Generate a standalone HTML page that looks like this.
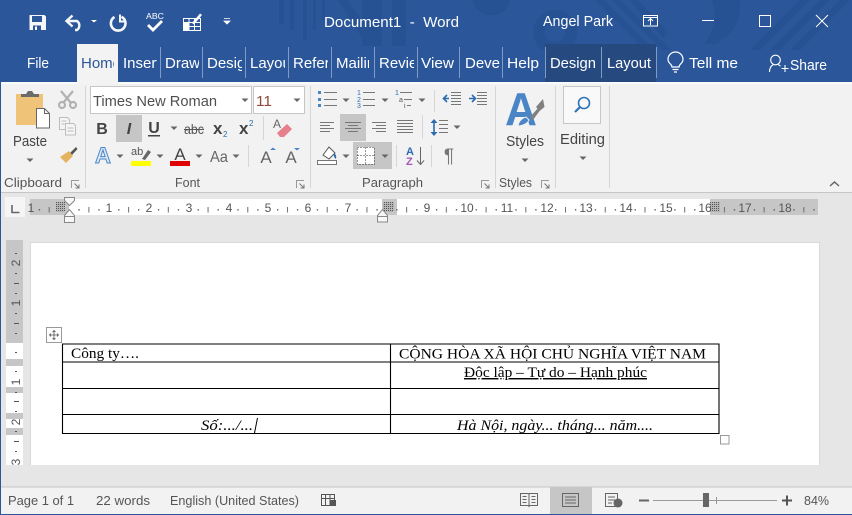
<!DOCTYPE html>
<html><head><meta charset="utf-8"><title>Document1 - Word</title>
<style>
html,body{margin:0;padding:0;background:#e6e6e6;width:852px;height:515px;overflow:hidden}
svg{display:block}
text{font-family:"Liberation Sans",sans-serif;white-space:pre}
.t{fill:#fff;font-size:15px}
.r{fill:#444;font-size:15px}
.s{fill:#555;font-size:13px}
.d{font-family:"Liberation Serif","Noto Serif CJK SC",serif;font-size:14.500px;fill:#000}
.n{fill:#555;font-size:12px;text-anchor:middle}
.w{fill:none;stroke:#fff}
</style></head><body>
<svg width="852" height="515" viewBox="0 0 852 515" xmlns="http://www.w3.org/2000/svg">
<defs>
<symbol id="ar" overflow="visible"><path d="M-3.5-1.5h7L0 2z" fill="#666"/></symbol>
<symbol id="la" overflow="visible"><path d="M.5 8V.5H8" fill="none" stroke="#999"/><path d="M3.5 3.5L8 8M8 4.5V8H4.5" fill="none" stroke="#777"/></symbol>
<pattern id="tk" x="69" y="0" width="39.72" height="20" patternUnits="userSpaceOnUse">
<rect x="9.5" y="7" width="1.2" height="1.6" fill="#555"/><rect x="19.4" y="5" width="1" height="5.5" fill="#666"/><rect x="29.4" y="7" width="1.2" height="1.6" fill="#555"/>
</pattern>
<pattern id="hat" width="2" height="2" patternUnits="userSpaceOnUse"><rect width="2" height="2" fill="#b5b5b5"/><rect width="1" height="1" fill="#555"/></pattern>
<clipPath id="c1"><rect x="77" y="44" width="37" height="38"/></clipPath>
<clipPath id="c2"><rect x="119" y="44" width="38" height="38"/></clipPath>
<clipPath id="c3"><rect x="162" y="44" width="37" height="38"/></clipPath>
<clipPath id="c4"><rect x="204" y="44" width="38" height="38"/></clipPath>
<clipPath id="c5"><rect x="247" y="44" width="38" height="38"/></clipPath>
<clipPath id="c6"><rect x="290" y="44" width="38" height="38"/></clipPath>
<clipPath id="c7"><rect x="333" y="44" width="36" height="38"/></clipPath>
<clipPath id="c8"><rect x="376" y="44" width="38" height="38"/></clipPath>
<clipPath id="c9"><rect x="462" y="44" width="38" height="38"/></clipPath>
</defs>

<!-- window base -->
<rect width="852" height="515" fill="#e6e6e6"/>
<rect width="852" height="82" fill="#2b579a"/>

<!-- title watermark -->
<g fill="#1f4a8a" opacity=".38">
<rect x="279" y="0" width="5" height="24"/><rect x="290" y="0" width="4" height="30"/><rect x="303" y="0" width="4" height="40"/><rect x="313" y="0" width="3" height="30"/><rect x="322" y="0" width="3" height="20"/>
<path d="M338 0h10l30 44h-12zM362 0h20v46h-20zM392 0h14v46h-14z"/>
<path d="M473 0h37a18 15 0 0 1-37 0z"/>
<path d="M555 10a22 22 0 1 0 .1 0zm0 12a10 10 0 1 1-.1 0z" fill-rule="evenodd"/>
<path d="M595 0h9l50 50h-9zM612 0h9l50 50h-9zM629 0h9l30 32-5 6z"/>
<path d="M712 0h28q2 30-24 44h-12q16-20 8-44z"/>
<path d="M800 0h10l-50 50h-10zM820 0h10l-50 50h-10zM840 0h10l-50 50h-10z"/>
</g>

<!-- QAT -->
<path d="M29.5 15h15l1.5 1.5V30H29.5z" fill="#f4f6fa"/>
<rect x="32" y="16" width="10" height="6" fill="#2b579a"/>
<rect x="33" y="25.5" width="8" height="4.500" fill="#2b579a"/><rect x="35" y="26.500" width="2" height="3.500" fill="#fff"/>
<path d="M67 21h10a5.500 5.500 0 0 1 0 9h-2" fill="none" stroke="#f4f6fa" stroke-width="2.400"/>
<path d="M72.500 15.500L66.500 21l6 5.500" fill="none" stroke="#f4f6fa" stroke-width="2.400"/>
<path d="M91 20h6l-3 2.500z" fill="#fff"/>
<path d="M114.500 17a7.300 7.300 0 1 0 7-.2" fill="none" stroke="#f4f6fa" stroke-width="2.600"/>
<path d="M120 14.500v7h6" fill="none" stroke="#f4f6fa" stroke-width="2"/>
<text x="146" y="19" fill="#fff" font-size="8.500" textLength="18" lengthAdjust="spacingAndGlyphs">ABC</text>
<path d="M148 25l5 5 9-9" fill="none" stroke="#fff" stroke-width="2.800"/>
<path d="M183.500 18.500h17v12h-17zM183.500 22.500h17M183.500 26.500h17M189 18.500v12M194.500 18.500v12" fill="none" stroke="#fff"/>
<rect x="184" y="23" width="5" height="7" fill="#fff"/>
<path d="M192 23l8-9.500 2 1.500-8 9.500z" fill="#fff"/>
<path d="M224 18.500h6M224 21h6l-3 3z" stroke="#fff" fill="#fff" stroke-width=".8"/>

<!-- title text -->
<text class="t" x="324" y="27" textLength="135" lengthAdjust="spacingAndGlyphs" xml:space="preserve">Document1  -  Word</text>
<text class="t" x="543" y="26" textLength="70" lengthAdjust="spacingAndGlyphs">Angel Park</text>
<g stroke="#fff" fill="none">
<path d="M643.500 15.500h14v10.500h-14zM643.500 17.500h14M650.500 25v-6M648 21l2.500-2.500 2.500 2.500"/>
<path d="M702 20.500h12"/>
<rect x="759.500" y="15.500" width="11" height="11"/>
<path d="M816 15l12 12M828 15l-12 12"/>
</g>

<!-- tabs -->
<rect x="545" y="44" width="111" height="38" fill="#26497f"/>
<rect x="77" y="44" width="41" height="39" fill="#f3f3f3"/>
<g stroke="#7f9cc6" stroke-width="1">
<path d="M160.500 47v31M202.500 47v31M245.500 47v31M288.500 47v31M331.500 47v31M374.500 47v31M417.500 47v31M459.500 47v31M502.500 47v31M545.500 47v31M601.500 47v31M656.500 47v31"/>
</g>
<text class="t" x="27" y="68" textLength="22" lengthAdjust="spacingAndGlyphs">File</text>
<g clip-path="url(#c1)"><text x="81" y="68" font-size="15" fill="#2b579a">Home</text></g>
<g clip-path="url(#c2)"><text class="t" x="123" y="68">Insert</text></g>
<g clip-path="url(#c3)"><text class="t" x="165" y="68">Draw</text></g>
<g clip-path="url(#c4)"><text class="t" x="207" y="68">Design</text></g>
<g clip-path="url(#c5)"><text class="t" x="250" y="68">Layout</text></g>
<g clip-path="url(#c6)"><text class="t" x="293" y="68">References</text></g>
<g clip-path="url(#c7)"><text class="t" x="336" y="68">Mailings</text></g>
<g clip-path="url(#c8)"><text class="t" x="379" y="68">Review</text></g>
<text class="t" x="421" y="68" textLength="33" lengthAdjust="spacingAndGlyphs">View</text>
<g clip-path="url(#c9)"><text class="t" x="465" y="68">Developer</text></g>
<text class="t" x="507" y="68" textLength="32" lengthAdjust="spacingAndGlyphs">Help</text>
<text class="t" x="550" y="68" textLength="46" lengthAdjust="spacingAndGlyphs">Design</text>
<text class="t" x="607" y="68" textLength="44" lengthAdjust="spacingAndGlyphs">Layout</text>
<path d="M672 67c0-3-4-3.500-4-7.500a7.500 7.500 0 0 1 15 0c0 4-4 4.500-4 7.500zM672.500 69.500h6M674 72h3" fill="none" stroke="#fff" stroke-width="1.200"/>
<text class="t" x="689" y="68" textLength="49" lengthAdjust="spacingAndGlyphs">Tell me</text>
<circle cx="775.500" cy="60" r="4.800" fill="none" stroke="#fff" stroke-width="1.100"/>
<path d="M769.500 72c0-4 2-6.500 4-7.500M778 64.500c1 .4 1.800 1 2.500 1.800M785 65v7M781.500 68.500h7" fill="none" stroke="#fff" stroke-width="1.100"/>
<text class="t" x="790" y="70" textLength="37" lengthAdjust="spacingAndGlyphs">Share</text>

<!-- ribbon -->
<rect x="0" y="82" width="852" height="111" fill="#f2f2f2"/>
<rect x="0" y="82" width="852" height="2" fill="#f7fbf9"/>
<rect x="77" y="82" width="41" height="2" fill="#f3f3f3"/>
<rect x="0" y="192" width="852" height="1" fill="#c6c6c6"/>
<g stroke="#d6d6d6"><path d="M85.500 86v102M310.500 86v102M495.500 86v102M555.500 86v102M609.500 86v102"/></g>

<!-- clipboard -->
<rect x="16" y="94" width="27" height="31" fill="#f0c478"/>
<path d="M21 97v-3h5l2-3h4l2 3h5v3z" fill="#6b6b6b"/>
<path d="M36.500 108.500h8l5 5v14.500h-13z" fill="#fff" stroke="#666"/><path d="M44.500 108.500v5h5" fill="none" stroke="#666"/>
<text class="r" x="13" y="146" textLength="34" lengthAdjust="spacingAndGlyphs">Paste</text>
<use href="#ar" x="30" y="160"/>
<g fill="none" stroke="#b2b2b2" stroke-width="2.200"><path d="M61 91l10 12M73 91l-10 12"/><circle cx="62" cy="105" r="3"/><circle cx="73" cy="105" r="3"/></g>
<g fill="#f5f5f5" stroke="#bdbdbd"><path d="M59.500 117.500h8l2 2v10h-10z"/><path d="M65.500 123.500h8l2 2v9.500h-10z"/><path d="M61.500 121h5M61.500 124h3M67.500 128h6M67.500 131h6" fill="none"/></g>
<path d="M70 153l6-6 1.500 2-5.500 6z" fill="#555"/><path d="M60 157l9-6 4 5-7 7z" fill="#e3b35f"/>
<text class="s" x="4" y="187" textLength="58" lengthAdjust="spacingAndGlyphs">Clipboard</text>
<use href="#la" x="71" y="180"/>

<!-- font -->
<rect x="90.500" y="86.500" width="161" height="27" fill="#fff" stroke="#c6c6c6"/>
<rect x="253.500" y="86.500" width="51" height="27" fill="#fff" stroke="#c6c6c6"/>
<text x="93" y="106" font-size="14.500" fill="#505050" textLength="124" lengthAdjust="spacingAndGlyphs">Times New Roman</text>
<text x="256" y="106" font-size="14.500" fill="#8a4b3c" textLength="16" lengthAdjust="spacingAndGlyphs">11</text>
<use href="#ar" x="245" y="100"/><use href="#ar" x="297" y="100"/>
<rect x="116" y="115" width="26" height="27" fill="#c6c6c6"/>
<text x="102" y="134" font-size="16" font-weight="bold" fill="#444" text-anchor="middle">B</text>
<text x="129" y="134" font-size="16" font-style="italic" font-weight="bold" fill="#444" text-anchor="middle">I</text>
<text x="154" y="133" font-size="16" font-weight="bold" fill="#444" text-anchor="middle">U</text>
<rect x="148" y="135" width="12" height="1.500" fill="#444"/>
<use href="#ar" x="174" y="128"/>
<text x="184" y="134" font-size="14" fill="#555" textLength="20" lengthAdjust="spacingAndGlyphs">abc</text>
<rect x="184" y="129" width="20" height="1" fill="#555"/>
<text x="213" y="134" font-size="17" font-weight="bold" fill="#444">x</text><text x="223" y="137" font-size="8" fill="#2b6cb0">2</text>
<text x="239" y="134" font-size="17" font-weight="bold" fill="#444">x</text><text x="249" y="126" font-size="8" fill="#2b6cb0">2</text>
<rect x="263" y="116" width="1" height="24" fill="#d6d6d6"/>
<text x="273" y="128" font-size="12" fill="#666">A</text>
<path d="M277 133l10-9 5 5-8 8h-4z" fill="#e8808c"/>
<text x="103" y="163" font-size="22" font-weight="bold" fill="#dce9f7" stroke="#4a86c5" stroke-width="1" text-anchor="middle">A</text>
<use href="#ar" x="120" y="156"/>
<text x="131" y="155" font-size="11" fill="#555">ab</text>
<path d="M142 159l6-9 3 2-6 8z" fill="#666"/>
<rect x="131" y="161" width="20" height="5" fill="#ffff00"/>
<use href="#ar" x="160" y="156"/>
<text x="180" y="160" font-size="17" fill="#444" text-anchor="middle">A</text>
<rect x="170" y="161" width="20" height="5" fill="#e00000"/>
<use href="#ar" x="199" y="156"/>
<text x="210" y="162" font-size="16" fill="#666" textLength="18" lengthAdjust="spacingAndGlyphs">Aa</text>
<use href="#ar" x="236" y="156"/>
<rect x="248" y="145" width="1" height="22" fill="#d6d6d6"/>
<text x="266" y="163" font-size="17" fill="#666" text-anchor="middle">A</text><path d="M270 150h6l-3-2.500z" fill="#4a86c5"/>
<text x="291" y="163" font-size="17" fill="#666" text-anchor="middle">A</text><path d="M294 148h6l-3 2.500z" fill="#4a86c5"/>
<text class="s" x="175" y="187" textLength="25" lengthAdjust="spacingAndGlyphs">Font</text>
<use href="#la" x="296" y="180"/>

<!-- paragraph row 1 -->
<g fill="#4a86c5"><rect x="318" y="91" width="3" height="3"/><rect x="318" y="98" width="3" height="3"/><rect x="318" y="104" width="3" height="3"/></g>
<g stroke="#777"><path d="M324 92.500h13M324 99.500h13M324 105.500h13M363 92.500h12M363 99.500h12M363 105.500h12M400 92.500h12M404 99.500h8M407 105.500h4"/></g>
<g font-size="7" fill="#2b6cb0"><text x="357" y="95">1</text><text x="357" y="102">2</text><text x="357" y="108">3</text><text x="395" y="95">1</text><text x="399" y="102" fill="#555">a</text><text x="404" y="108" fill="#555">i</text></g>
<use href="#ar" x="346" y="100"/><use href="#ar" x="385" y="100"/><use href="#ar" x="422" y="100"/>
<rect x="434" y="90" width="1" height="22" fill="#d6d6d6"/>
<g stroke="#777"><path d="M451 92.500h10M451 95.500h10M451 98.500h10M451 101.500h10M451 104.500h10M477 92.500h10M477 95.500h10M477 98.500h10M477 101.500h10M477 104.500h10"/></g>
<path d="M449 98.500h-6M447 95l-3.500 3.500L447 102M469 98.500h6M472 95l3.500 3.500L472 102" fill="none" stroke="#2b6cb0" stroke-width="1.600"/>

<!-- paragraph row 2 -->
<rect x="340" y="114" width="26" height="27" fill="#c6c6c6"/>
<g stroke="#777"><path d="M320 122.500h14M320 125.500h10M320 128.500h14M320 131.500h10M345 122.500h16M348 125.500h10M345 128.500h16M348 131.500h10M372 122.500h14M376 125.500h10M372 128.500h14M376 131.500h10M397 120.500h16M397 123.500h16M397 126.500h16M397 129.500h16M397 132.500h16"/></g>
<rect x="422" y="115" width="1" height="24" fill="#d6d6d6"/>
<path d="M434 119l-3.500 4h7zM434 136l-3.500-4h7z" fill="#2b6cb0"/><rect x="433.200" y="122" width="1.600" height="11" fill="#2b6cb0"/>
<g stroke="#777"><path d="M439 120.500h9M439 124.500h9M439 128.500h9M439 132.500h9"/></g>
<use href="#ar" x="457" y="127"/>

<!-- paragraph row 3 -->
<rect x="353" y="142" width="39" height="27" fill="#c6c6c6"/>
<path d="M323 155l6-8 6 6-6 6z" fill="#fff" stroke="#555"/><path d="M334 153q3 2 2 6-3-2-2-6z" fill="#2b6cb0"/>
<rect x="317.500" y="160.500" width="19" height="4" fill="#fff" stroke="#777"/>
<use href="#ar" x="346" y="156"/>
<rect x="357" y="147" width="17" height="17" fill="#fff"/>
<path d="M357.500 147.500h17v17h-17zM357.500 155.500h17M365.500 147.500v17" fill="none" stroke="#333" stroke-dasharray="1 2"/>
<use href="#ar" x="385" y="156"/>
<rect x="396" y="145" width="1" height="22" fill="#d6d6d6"/>
<text x="406" y="155" font-size="11" font-weight="bold" fill="#2b6cb0">A</text>
<text x="406" y="165" font-size="11" font-weight="bold" fill="#a155b9">Z</text>
<path d="M420.500 147v17M417 160.500l3.500 4 3.500-4" fill="none" stroke="#666"/>
<rect x="431" y="145" width="1" height="22" fill="#d6d6d6"/>
<text x="449" y="162" font-size="19" fill="#777" text-anchor="middle">¶</text>
<text class="s" x="362" y="187" textLength="61" lengthAdjust="spacingAndGlyphs">Paragraph</text>
<use href="#la" x="481" y="180"/>

<!-- styles -->
<text x="505" y="125" font-size="46" font-weight="bold" fill="#4a86c5" textLength="32" lengthAdjust="spacingAndGlyphs">A</text>
<path d="M530 117l9-10 2 2-8 11z" fill="#808080"/>
<path d="M536 107l7-8 1.500 8-5 4z" fill="#808080"/>
<path d="M518 126q1-7 8-9l3 3q-2 5-11 6z" fill="#4a86c5" stroke="#f2f2f2"/>
<text class="r" x="506" y="146" textLength="38" lengthAdjust="spacingAndGlyphs">Styles</text>
<use href="#ar" x="525" y="160"/>
<text class="s" x="499" y="187" textLength="33" lengthAdjust="spacingAndGlyphs">Styles</text>
<use href="#la" x="541" y="180"/>

<!-- editing -->
<rect x="563.500" y="86.500" width="37" height="37" fill="#f9f9f9" stroke="#c6c6c6"/>
<circle cx="584" cy="103" r="5.500" fill="none" stroke="#2f75b5" stroke-width="1.600"/>
<path d="M580 107l-5 5" stroke="#2f75b5" stroke-width="2.200"/>
<text class="r" x="560" y="144" textLength="45" lengthAdjust="spacingAndGlyphs">Editing</text>
<use href="#ar" x="583" y="158"/>
<path d="M830 186l4.500-4 4.500 4" fill="none" stroke="#666" stroke-width="1.500"/>

<!-- horizontal ruler -->
<rect x="5" y="197" width="20" height="20" fill="#f5f5f5"/>
<path d="M12 205v7.500h7.500" fill="none" stroke="#666" stroke-width="1.600"/>
<rect x="30" y="199" width="788" height="16" fill="#fff"/>
<rect x="30" y="199" width="39" height="16" fill="#c6c6c6"/>
<rect x="382" y="199" width="15" height="16" fill="#c6c6c6"/>
<rect x="710" y="199" width="108" height="16" fill="#c6c6c6"/>
<rect x="30" y="197" width="788" height="20" fill="url(#tk)" transform="translate(0,2)" opacity=".95"/>
<rect x="56" y="202" width="9" height="10" fill="url(#hat)"/>
<rect x="383" y="202" width="11" height="10" fill="url(#hat)"/>
<rect x="710" y="202" width="10" height="10" fill="url(#hat)"/>
<g><text class="n" x="31" y="212">1</text><text class="n" x="109" y="212">1</text><text class="n" x="149" y="212">2</text><text class="n" x="189" y="212">3</text><text class="n" x="229" y="212">4</text><text class="n" x="268" y="212">5</text><text class="n" x="308" y="212">6</text><text class="n" x="348" y="212">7</text><text class="n" x="427" y="212">9</text><text class="n" x="467" y="212">10</text><text class="n" x="507" y="212">11</text><text class="n" x="547" y="212">12</text><text class="n" x="586" y="212">13</text><text class="n" x="626" y="212">14</text><text class="n" x="666" y="212">15</text><text class="n" x="705" y="212">16</text><text class="n" x="745" y="212">17</text><text class="n" x="785" y="212">18</text></g>
<path d="M64.500 197.500h10v3l-5 5-5-5zM64.500 215.500l5-6 5 6v1h-10zM64.500 216.500h10v6h-10z" fill="#f7f7f7" stroke="#888"/>
<path d="M377.500 215.500l5-6 5 6v6.500h-10z" fill="#f7f7f7" stroke="#888"/><path d="M377.500 216.500h10" stroke="#888"/>

<!-- vertical ruler -->
<rect x="6" y="240" width="17" height="225" fill="#fff"/>
<g fill="#c6c6c6"><rect x="6" y="240" width="17" height="103"/><rect x="6" y="359" width="17" height="7"/><rect x="6" y="387" width="17" height="6"/><rect x="6" y="413" width="17" height="6"/><rect x="6" y="428" width="17" height="7"/></g>
<g fill="#555">
<text class="n" transform="translate(20,263) rotate(-90)">2</text><text class="n" transform="translate(20,303) rotate(-90)">1</text><text class="n" transform="translate(20,382) rotate(-90)">1</text><text class="n" transform="translate(20,422) rotate(-90)">2</text><text class="n" transform="translate(20,462) rotate(-90)">3</text>
<rect x="15" y="253" width="2" height="1"/><rect x="14" y="283" width="5" height="1"/><rect x="15" y="273" width="2" height="1"/><rect x="15" y="293" width="2" height="1"/><rect x="15" y="313" width="2" height="1"/><rect x="14" y="323" width="5" height="1"/><rect x="15" y="333" width="2" height="1"/><rect x="15" y="352" width="2" height="1"/><rect x="15" y="371" width="2" height="1"/><rect x="14" y="401" width="5" height="1"/><rect x="15" y="392" width="2" height="1"/><rect x="15" y="411" width="2" height="1"/><rect x="14" y="441" width="5" height="1"/><rect x="15" y="431" width="2" height="1"/><rect x="15" y="451" width="2" height="1"/>
</g>

<!-- page -->
<rect x="30" y="242" width="790" height="223" fill="#d9d9d9"/>
<rect x="31" y="243" width="788" height="222" fill="#fff"/>

<!-- table -->
<g stroke="#000" stroke-width="1.100" fill="none">
<path d="M62.500 344h656.500v89.500H62.500zM62.500 362H719M62.500 388.500H719M62.500 414.500H719M390.500 344v89.500"/>
</g>
<rect x="46.500" y="327.500" width="15" height="15" fill="#fff" stroke="#999"/>
<path d="M54 330.500v9M49.500 335h9M52.500 332l1.500-1.500 1.500 1.500M52.500 338l1.500 1.500 1.500-1.500M51 333.500L49.500 335l1.500 1.500M57 333.500l1.500 1.500-1.500 1.500" fill="none" stroke="#555" stroke-width=".8"/>
<rect x="720.500" y="435.500" width="8.500" height="8.500" fill="#fff" stroke="#999"/>
<text class="d" x="71" y="358" textLength="68" lengthAdjust="spacingAndGlyphs">Công ty….</text>
<text class="d" x="399" y="358.500" textLength="307" lengthAdjust="spacingAndGlyphs">CỘNG HÒA XÃ HỘI CHỦ NGHĨA VIỆT NAM</text>
<text class="d" x="464" y="377" textLength="183" lengthAdjust="spacingAndGlyphs" text-decoration="underline">Độc lập – Tự do – Hạnh phúc</text>
<text class="d" x="201" y="430" font-style="italic" textLength="52" lengthAdjust="spacingAndGlyphs">Số:.../...</text>
<text class="d" x="457" y="430" font-style="italic" textLength="196" lengthAdjust="spacingAndGlyphs">Hà Nội, ngày... tháng... năm....</text>
<path d="M254.500 433l3-15" stroke="#000" stroke-width="1"/>

<!-- status bar -->
<rect x="0" y="487" width="852" height="27" fill="#f2f2f2"/>
<rect x="0" y="486.500" width="852" height="1" fill="#c6c6c6"/>
<text class="s" x="8" y="505" textLength="66" lengthAdjust="spacingAndGlyphs">Page 1 of 1</text>
<text class="s" x="96" y="505" textLength="54" lengthAdjust="spacingAndGlyphs">22 words</text>
<text class="s" x="170" y="505" textLength="129" lengthAdjust="spacingAndGlyphs">English (United States)</text>
<path d="M321.500 494.500h13v11h-13zM321.500 498.500h13M325.500 494.500v11M330 494.500v11" fill="none" stroke="#555"/>
<rect x="330" y="500" width="6" height="6" fill="#555"/>
<rect x="550" y="487" width="42" height="27" fill="#c6c6c6"/>
<path d="M520.500 493.500h8l.5 1 .5-1h8v12h-8l-.5 1-.5-1h-8zM529 494v12M522.500 496.500h4M522.500 499.500h4M522.500 502.500h4M531.500 496.500h4M531.500 499.500h4M531.500 502.500h4" fill="none" stroke="#666"/>
<path d="M562.500 493.500h16v13h-16zM565 497h11M565 500h11M565 503h11" fill="none" stroke="#666"/>
<path d="M605.500 493.500h12v13h-12zM608 497h7M608 500h7M608 503h4" fill="none" stroke="#666"/>
<circle cx="618" cy="503" r="4.500" fill="#666"/>
<rect x="639" y="499.500" width="10" height="2" fill="#666"/>
<rect x="653" y="500" width="124" height="1" fill="#999"/>
<rect x="716" y="497" width="1" height="7" fill="#999"/>
<rect x="703" y="493" width="6" height="14" fill="#666"/>
<path d="M782 500.500h10M787 495.500v10" stroke="#555" stroke-width="2"/>
<text class="s" x="804" y="505" textLength="25" lengthAdjust="spacingAndGlyphs">84%</text>

<!-- window border -->
<rect x="0" y="82" width="1" height="433" fill="#2b579a"/>
<rect x="0" y="514" width="852" height="1" fill="#2b579a"/>
</svg>
</body></html>
